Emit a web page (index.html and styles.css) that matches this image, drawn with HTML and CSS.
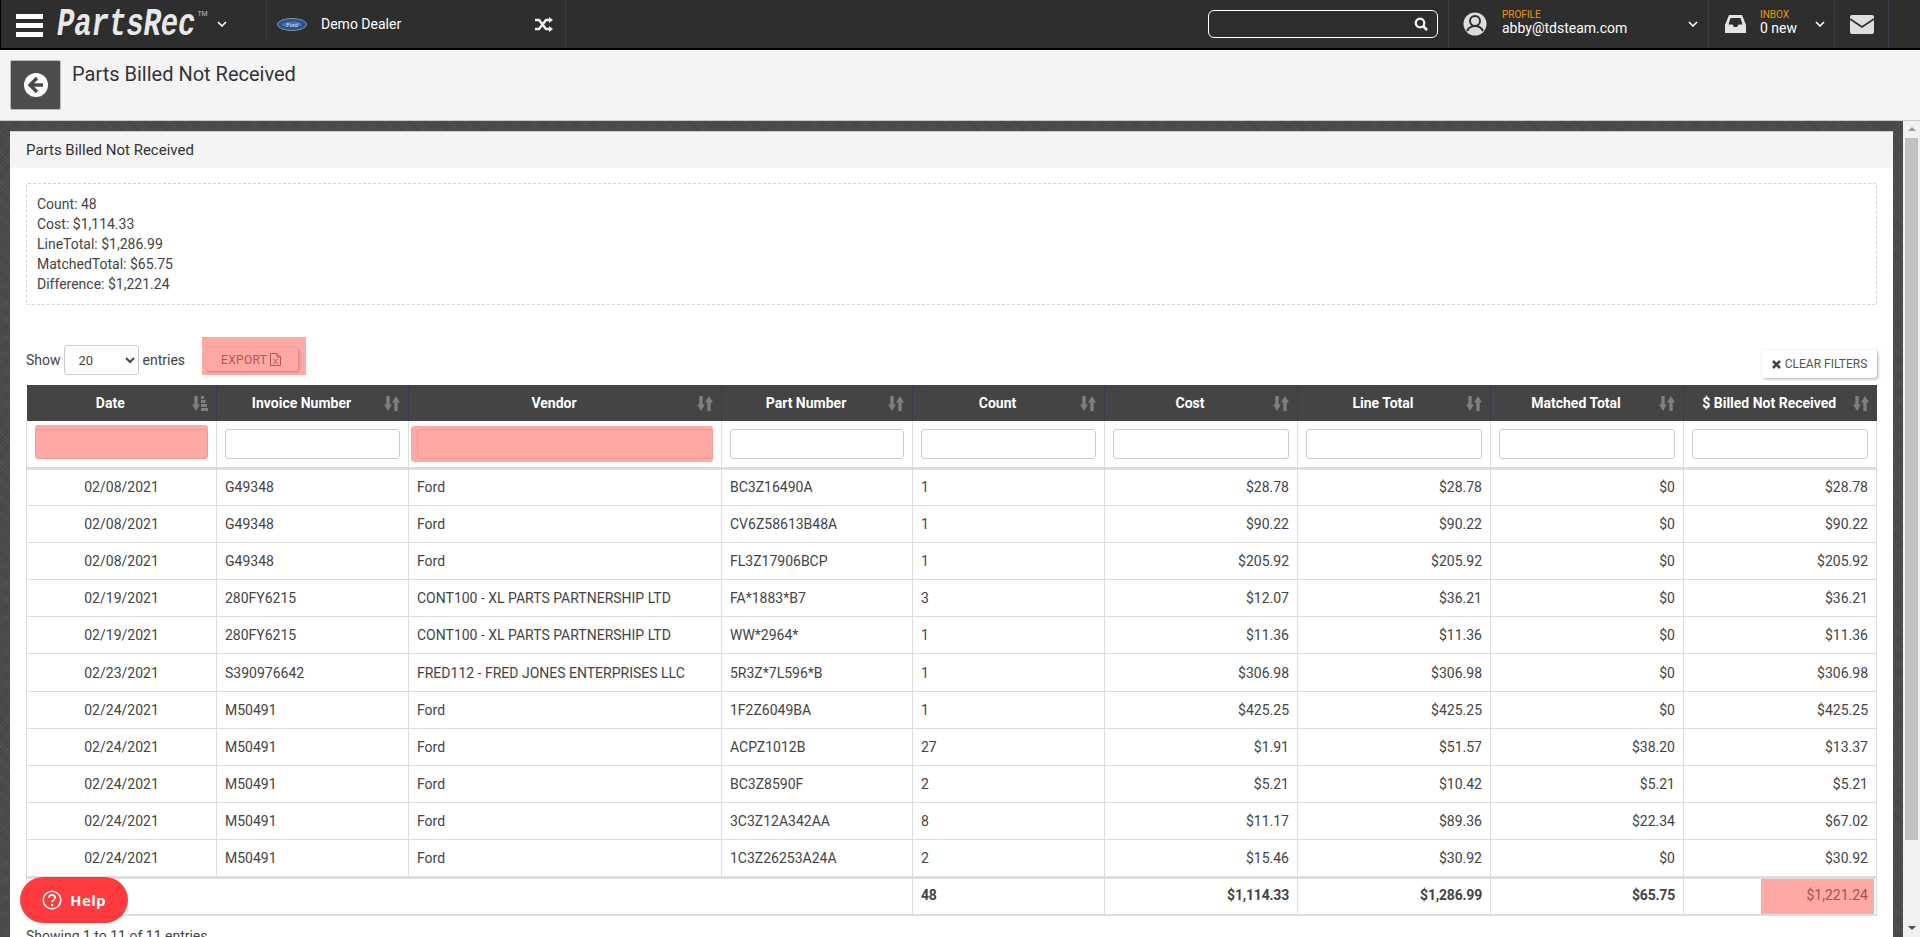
FILE: index.html
```html
<!DOCTYPE html>
<html lang="en">
<head>
    <meta charset="UTF-8">
    <meta name="viewport" content="width=device-width, initial-scale=1.0">
    <title>Parts Billed Not Received</title>
    <link rel="stylesheet" href="styles.css">
</head>
<body>
    <svg class="sprites" width="0" height="0">
        <symbol id="sort-both" viewBox="0 0 16 15">
            <path d="M2.300 0h3.400v8.500h2.300L4 15 0 8.500h2.300zM10.300 15h3.400V6.500H16L12 0 8 6.500h2.300z"/>
        </symbol>
        <symbol id="sort-asc" viewBox="0 0 16 15">
            <path d="M2.300 0h3.400v8.500h2.300L4 15 0 8.500h2.300zM9 0h3v3H9zM9 4h4.500v3H9zM9 8h6v3H9zM9 12h7v3H9z"/>
        </symbol>
    </svg>

    <header class="topbar">
        <div class="brand">
            <div class="burger"><span></span><span></span><span></span></div>
            <span class="logo">PartsRec</span>
            <span class="tm">TM</span>
            <svg class="chev" width="10" height="6" viewBox="0 0 10 6"><path d="M1 1l4 4 4-4" fill="none" stroke="#fff" stroke-width="1.600"/></svg>
        </div>
        <div class="dealer">
            <svg class="ford" width="30" height="13" viewBox="0 0 30 13">
                <ellipse cx="15" cy="6.500" rx="14.500" ry="6" fill="#2a4f8f" stroke="#8d97a3"/>
                <ellipse cx="15" cy="6.500" rx="10" ry="3" fill="#4a6fae"/>
                <text x="15" y="9" class="ford-text" text-anchor="middle">Ford</text>
            </svg>
            <span class="dealer-name">Demo Dealer</span>
            <svg class="shuffle" width="18" height="15" viewBox="0 0 18 15">
                <path d="M0 3h4l7 9h3M0 12h4l7-9h3" fill="none" stroke="#f0f0f0" stroke-width="2.400"/>
                <path d="M14 0l4 3-4 3zM14 9l4 3-4 3z" fill="#f0f0f0"/>
            </svg>
        </div>
        <div class="top-spacer"></div>
        <div class="search">
            <svg width="14" height="14" viewBox="0 0 14 14"><circle cx="6" cy="6" r="4.300" fill="none" stroke="#fff" stroke-width="2.200"/><path d="M9 9l4 4" stroke="#fff" stroke-width="2.600"/></svg>
        </div>
        <div class="top-item profile">
            <svg width="24" height="24" viewBox="0 0 24 24">
                <circle cx="12" cy="12" r="11.500" fill="#dcdcdc"/>
                <circle cx="12" cy="9" r="5" fill="#dcdcdc" stroke="#2e2e2e" stroke-width="2"/>
                <path d="M4 19c2-4 5-5 8-5s6 1 8 5" fill="none" stroke="#2e2e2e" stroke-width="2"/>
            </svg>
            <div class="top-text">
                <span class="top-label">PROFILE</span>
                <span class="top-value">abby@tdsteam.com</span>
            </div>
            <svg class="chev" width="10" height="6" viewBox="0 0 10 6"><path d="M1 1l4 4 4-4" fill="none" stroke="#fff" stroke-width="1.600"/></svg>
        </div>
        <div class="top-item inbox">
            <svg width="21" height="18" viewBox="0 0 21 18">
                <path d="M4 0h13l4 10v8H0v-8z" fill="#e4e4e4"/>
                <path d="M5.500 3h10l2 6.500h-4L12 12H9L7.500 9.500h-4z" fill="#2e2e2e"/>
            </svg>
            <div class="top-text">
                <span class="top-label">INBOX</span>
                <span class="top-value">0 new</span>
            </div>
            <svg class="chev" width="10" height="6" viewBox="0 0 10 6"><path d="M1 1l4 4 4-4" fill="none" stroke="#fff" stroke-width="1.600"/></svg>
        </div>
        <div class="top-item mail">
            <svg width="24" height="19" viewBox="0 0 24 19">
                <rect width="24" height="19" rx="2" fill="#dedede"/>
                <path d="M0 4l12 8 12-8" fill="none" stroke="#2e2e2e" stroke-width="1.800"/>
            </svg>
        </div>
    </header>

    <div class="subheader">
        <div class="back-btn">
            <svg width="24" height="24" viewBox="0 0 24 24">
                <circle cx="12" cy="12" r="12" fill="#fff"/>
                <path d="M13 5l-7 7 7 7M6.500 12H19" fill="none" stroke="#4a4a4a" stroke-width="3.400"/>
            </svg>
        </div>
        <h1 class="page-title">Parts Billed Not Received</h1>
    </div>

    <div class="workspace">
        <main class="content">
            <section class="panel">
                <h2 class="panel-title">Parts Billed Not Received</h2>
                <div class="panel-body">
                    <div class="summary">
                        <div>Count: 48</div>
                        <div>Cost: $1,114.33</div>
                        <div>LineTotal: $1,286.99</div>
                        <div>MatchedTotal: $65.75</div>
                        <div>Difference: $1,221.24</div>
                    </div>

                    <div class="table-tools">
                        <div class="length">
                            <span>Show</span>
                            <select class="length-select"><option>20</option></select>
                            <span>entries</span>
                        </div>
                        <div class="export-mark">
                            <button class="export-btn" type="button">EXPORT
                                <svg width="11" height="13" viewBox="0 0 11 13">
                                    <path d="M.5.500h6.500l3.500 3.500v8.500H.5zM7 .5V4h3.500M3.500 6l4 5M7.500 6l-4 5" fill="none" stroke="#c0504d"/>
                                </svg>
                            </button>
                        </div>
                        <button class="clear-btn" type="button">
                            <svg width="9" height="9" viewBox="0 0 9 9"><path d="M1 1l7 7M8 1L1 8" stroke="#444" stroke-width="2.600"/></svg>
                            CLEAR FILTERS
                        </button>
                    </div>

                    <table class="grid">
                        <colgroup>
                            <col class="c-date"><col class="c-inv"><col class="c-vendor"><col class="c-part"><col class="c-count">
                            <col class="c-cost"><col class="c-line"><col class="c-match"><col class="c-billed">
                        </colgroup>
                        <thead>
                            <tr class="head-row">
                                <th><div class="th-in"><span>Date</span><svg class="sort"><use href="#sort-asc"/></svg></div></th>
                                <th><div class="th-in"><span>Invoice Number</span><svg class="sort"><use href="#sort-both"/></svg></div></th>
                                <th><div class="th-in"><span>Vendor</span><svg class="sort"><use href="#sort-both"/></svg></div></th>
                                <th><div class="th-in"><span>Part Number</span><svg class="sort"><use href="#sort-both"/></svg></div></th>
                                <th><div class="th-in"><span>Count</span><svg class="sort"><use href="#sort-both"/></svg></div></th>
                                <th><div class="th-in"><span>Cost</span><svg class="sort"><use href="#sort-both"/></svg></div></th>
                                <th><div class="th-in"><span>Line Total</span><svg class="sort"><use href="#sort-both"/></svg></div></th>
                                <th><div class="th-in"><span>Matched Total</span><svg class="sort"><use href="#sort-both"/></svg></div></th>
                                <th><div class="th-in"><span>$ Billed Not Received</span><svg class="sort"><use href="#sort-both"/></svg></div></th>
                            </tr>
                            <tr class="filter-row">
                                <td><input class="filter filter-date" type="text"></td>
                                <td><input class="filter" type="text"></td>
                                <td><input class="filter filter-vendor" type="text"></td>
                                <td><input class="filter" type="text"></td>
                                <td><input class="filter" type="text"></td>
                                <td><input class="filter" type="text"></td>
                                <td><input class="filter" type="text"></td>
                                <td><input class="filter" type="text"></td>
                                <td><input class="filter" type="text"></td>
                            </tr>
                        </thead>
                        <tbody>
                            <tr><td class="mid">02/08/2021</td><td>G49348</td><td>Ford</td><td>BC3Z16490A</td><td>1</td><td class="num">$28.78</td><td class="num">$28.78</td><td class="num">$0</td><td class="num">$28.78</td></tr>
                            <tr><td class="mid">02/08/2021</td><td>G49348</td><td>Ford</td><td>CV6Z58613B48A</td><td>1</td><td class="num">$90.22</td><td class="num">$90.22</td><td class="num">$0</td><td class="num">$90.22</td></tr>
                            <tr><td class="mid">02/08/2021</td><td>G49348</td><td>Ford</td><td>FL3Z17906BCP</td><td>1</td><td class="num">$205.92</td><td class="num">$205.92</td><td class="num">$0</td><td class="num">$205.92</td></tr>
                            <tr><td class="mid">02/19/2021</td><td>280FY6215</td><td>CONT100 - XL PARTS PARTNERSHIP LTD</td><td>FA*1883*B7</td><td>3</td><td class="num">$12.07</td><td class="num">$36.21</td><td class="num">$0</td><td class="num">$36.21</td></tr>
                            <tr><td class="mid">02/19/2021</td><td>280FY6215</td><td>CONT100 - XL PARTS PARTNERSHIP LTD</td><td>WW*2964*</td><td>1</td><td class="num">$11.36</td><td class="num">$11.36</td><td class="num">$0</td><td class="num">$11.36</td></tr>
                            <tr><td class="mid">02/23/2021</td><td>S390976642</td><td>FRED112 - FRED JONES ENTERPRISES LLC</td><td>5R3Z*7L596*B</td><td>1</td><td class="num">$306.98</td><td class="num">$306.98</td><td class="num">$0</td><td class="num">$306.98</td></tr>
                            <tr><td class="mid">02/24/2021</td><td>M50491</td><td>Ford</td><td>1F2Z6049BA</td><td>1</td><td class="num">$425.25</td><td class="num">$425.25</td><td class="num">$0</td><td class="num">$425.25</td></tr>
                            <tr><td class="mid">02/24/2021</td><td>M50491</td><td>Ford</td><td>ACPZ1012B</td><td>27</td><td class="num">$1.91</td><td class="num">$51.57</td><td class="num">$38.20</td><td class="num">$13.37</td></tr>
                            <tr><td class="mid">02/24/2021</td><td>M50491</td><td>Ford</td><td>BC3Z8590F</td><td>2</td><td class="num">$5.21</td><td class="num">$10.42</td><td class="num">$5.21</td><td class="num">$5.21</td></tr>
                            <tr><td class="mid">02/24/2021</td><td>M50491</td><td>Ford</td><td>3C3Z12A342AA</td><td>8</td><td class="num">$11.17</td><td class="num">$89.36</td><td class="num">$22.34</td><td class="num">$67.02</td></tr>
                            <tr><td class="mid">02/24/2021</td><td>M50491</td><td>Ford</td><td>1C3Z26253A24A</td><td>2</td><td class="num">$15.46</td><td class="num">$30.92</td><td class="num">$0</td><td class="num">$30.92</td></tr>
                        </tbody>
                        <tfoot>
                            <tr>
                                <td colspan="4"></td>
                                <td>48</td>
                                <td class="num">$1,114.33</td>
                                <td class="num">$1,286.99</td>
                                <td class="num">$65.75</td>
                                <td class="num total-flag">$1,221.24</td>
                            </tr>
                        </tfoot>
                    </table>

                    <div class="table-info">Showing 1 to 11 of 11 entries</div>
                </div>
            </section>
        </main>
        <div class="scrollbar">
            <span class="arrow-up"></span>
            <div class="thumb"></div>
            <span class="arrow-down"></span>
        </div>
    </div>

    <button class="help-btn" type="button">
        <svg width="20" height="20" viewBox="0 0 20 20">
            <circle cx="10" cy="10" r="8.800" fill="none" stroke="#fff" stroke-width="1.600"/>
            <path d="M7 7.800c0-4 6-4 6 0 0 2.200-3 2.200-3 4.400" fill="none" stroke="#fff" stroke-width="1.800"/>
            <circle cx="10" cy="15" r="1.200" fill="#fff"/>
        </svg>
        Help
    </button>
</body>
</html>
```

FILE: styles.css
```css
* {
    box-sizing: border-box;
}
html, body {
    height: 100%;
}
body {
    margin: 0;
    display: flex;
    flex-direction: column;
    overflow: hidden;
    font-family: Roboto, "Liberation Sans", sans-serif;
    font-size: 14px;
    color: #444;
    background-color: #f4f4f4;
}
.sprites {
    position: absolute;
}

/* top bar */
.topbar {
    display: flex;
    flex: none;
    height: 50px;
    color: #fff;
    background-color: #2e2e2e;
    border-left: 1px solid #000;
    border-bottom: 2px solid #000;
}
.brand {
    display: flex;
    align-items: center;
    width: 266px;
    height: 42px;
    padding-left: 15px;
    border-right: 1px solid #3a3a48;
}
.burger {
    display: flex;
    flex-direction: column;
    gap: 4px;
    width: 27px;
    margin-top: 8px;
    margin-right: 14px;
}
.burger span {
    height: 5px;
    background-color: #fff;
}
.logo {
    display: inline-block;
    margin-top: 7px;
    font-family: "Liberation Mono", monospace;
    font-style: italic;
    font-weight: 700;
    font-size: 29px;
    letter-spacing: -.1px;
    color: #e8e8e8;
    transform: scaleY(1.35);
}
.tm {
    align-self: flex-start;
    margin-top: 10px;
    margin-left: 2px;
    font-size: 7px;
    color: #bbb;
}
.brand .chev {
    margin-top: 6px;
    margin-left: 9px;
}
.dealer {
    display: flex;
    align-items: center;
    width: 299px;
    padding-left: 10px;
    border-right: 1px solid #3a3a48;
}
.ford-text {
    font-family: "Liberation Serif", serif;
    font-style: italic;
    font-size: 6px;
    fill: #dfe6f0;
}
.dealer-name {
    margin-left: 14px;
    font-size: 14px;
    font-weight: 400;
}
.shuffle {
    margin-left: auto;
    margin-right: 12px;
}
.top-spacer {
    flex: 1;
}
.search {
    display: flex;
    align-items: center;
    justify-content: flex-end;
    width: 230px;
    height: 28px;
    margin-top: 10px;
    padding-right: 9px;
    border: 1px solid #fff;
    border-radius: 6px;
}
.top-item {
    display: flex;
    align-items: center;
    height: 48px;
    border-right: 1px solid #3a3a48;
}
.profile {
    width: 261px;
    margin-left: 10px;
    padding-left: 14px;
    border-left: 1px solid #3a3a48;
}
.inbox {
    width: 126px;
    padding-left: 16px;
}
.inbox .top-text {
    margin-left: 14px;
}
.mail {
    width: 54px;
    padding-left: 15px;
    margin-right: 31px;
}
.top-text {
    display: flex;
    flex-direction: column;
    margin-left: 15px;
    margin-top: -2px;
}
.top-label {
    font-size: 10px;
    line-height: 11px;
    color: #e69a00;
}
.top-value {
    font-size: 14px;
    line-height: 17px;
}
.top-item .chev {
    margin-left: auto;
    margin-right: 10px;
}
.inbox .chev {
    margin-right: 9px;
}

/* page heading */
.subheader {
    display: flex;
    flex: none;
    height: 71px;
    padding: 10px 10px 0;
    background-color: #f4f4f4;
    border-bottom: 1px solid #ccc;
}
.back-btn {
    display: flex;
    align-items: center;
    justify-content: center;
    width: 51px;
    height: 50px;
    background-color: #4d4d4d;
    border: 1px solid #bbb;
    border-radius: 2px;
}
.page-title {
    margin: 2px 0 0 11px;
    font-size: 20px;
    font-weight: 400;
    line-height: 24px;
    color: #333;
}

/* dark textured area + panel */
.workspace {
    display: flex;
    flex: 1;
    min-height: 0;
}
.content {
    flex: 1;
    min-width: 0;
    overflow: hidden;
    padding: 10px 10px 0;
    background-color: #4c4c4c;
    background-image:
        repeating-linear-gradient(45deg, rgba(0, 0, 0, .09) 0 1px, transparent 1px 2px),
        repeating-linear-gradient(-45deg, rgba(255, 255, 255, .04) 0 1px, transparent 1px 3px);
}
.panel {
    background-color: #fff;
    border-top: 1px solid #ccc;
}
.panel-title {
    margin: 0;
    height: 36px;
    padding: 0 16px;
    font-size: 15px;
    font-weight: 400;
    line-height: 36px;
    color: #333;
    background-color: #f4f4f4;
}
.panel-body {
    padding: 15px 16px 20px;
}
.summary {
    height: 122px;
    padding: 10px;
    line-height: 20px;
    border: 1px dashed #d4d4d4;
    border-radius: 2px;
}

/* show entries / export / clear */
.table-tools {
    display: flex;
    align-items: flex-start;
    height: 80px;
    padding-top: 32px;
}
.length {
    display: flex;
    align-items: center;
    gap: 3px;
    height: 30px;
    margin-top: 8px;
}
.length-select {
    width: 75px;
    height: 30px;
    margin-right: 1px;
    padding-left: 10px;
    font-family: Roboto, sans-serif;
    font-size: 13px;
    color: #444;
    background-color: #fff;
    border: 1px solid #ccc;
    border-radius: 3px;
}
.export-mark {
    display: flex;
    align-items: center;
    width: 104px;
    height: 38px;
    margin-left: 17px;
    padding-left: 4px;
    background-color: #ffa9a4;
}
.export-btn {
    display: flex;
    align-items: center;
    gap: 3px;
    width: 92px;
    height: 23px;
    margin-top: 7px;
    padding: 0 0 0 15px;
    font-family: Roboto, sans-serif;
    font-size: 12px;
    letter-spacing: .3px;
    color: #c0504d;
    background-color: #ffa9a4;
    border: none;
    border-radius: 3px;
    box-shadow: 1px 1px 3px rgba(150, 60, 60, .45);
}
.clear-btn {
    display: flex;
    align-items: center;
    justify-content: center;
    gap: 4px;
    width: 115px;
    height: 28px;
    margin-top: 13px;
    margin-left: auto;
    padding: 0;
    font-family: Roboto, sans-serif;
    font-size: 12px;
    color: #555;
    background-color: #fff;
    border: none;
    border-radius: 3px;
    box-shadow: 1px 1px 3px rgba(0, 0, 0, .35);
}

/* table */
.grid {
    width: 1850px;
    table-layout: fixed;
    border-collapse: collapse;
}
.c-date { width: 190px; }
.c-inv { width: 192px; }
.c-vendor { width: 313px; }
.c-part { width: 191px; }
.c-count { width: 192px; }
.c-cost { width: 193px; }
.c-line { width: 193px; }
.c-match { width: 193px; }
.c-billed { width: 193px; }
.head-row th {
    height: 36px;
    padding: 0 8px;
    font-size: 14px;
    font-weight: 700;
    color: #fff;
    background-color: #444;
    border-right: 1px solid #3a3a55;
}
.head-row th:last-child {
    border-right: none;
}
.th-in {
    display: flex;
    align-items: center;
    gap: 6px;
}
.th-in span {
    flex: 1;
    text-align: center;
    white-space: nowrap;
}
.sort {
    flex: none;
    width: 16px;
    height: 15px;
    fill: #7f7f7f;
}
.filter-row td {
    height: 47px;
    padding: 1px 8px 0;
    border: 1px solid #ddd;
    border-top: none;
    border-bottom: 3px solid #ddd;
}
.filter {
    display: block;
    width: 100%;
    height: 30px;
    background-color: #fff;
    border: 1px solid #ccc;
    border-radius: 3px;
}
.filter-date {
    background-color: #ffa9a4;
    border-color: #f29a95;
    box-shadow: 0 -4px 0 #ffa9a4;
}
.filter-vendor {
    background-color: #ffa9a4;
    border-color: #f29a95;
    box-shadow: -6px -3px 0 #ffa9a4, -6px 3px 0 #ffa9a4, 0 -3px 0 #ffa9a4, 0 3px 0 #ffa9a4;
}
.grid tbody td {
    height: 37.2px;
    padding: 0 8px;
    white-space: nowrap;
    border: 1px solid #ddd;
}
.grid tfoot td {
    height: 38px;
    padding: 0 8px 2px;
    font-weight: 700;
    letter-spacing: -.2px;
    border: 1px solid #ddd;
    border-top: 3px solid #ddd;
    border-bottom: 2px solid #ddd;
}
.grid .mid {
    text-align: center;
}
.grid .num {
    text-align: right;
}
.grid .total-flag {
    font-weight: 400;
    letter-spacing: 0;
    color: #a8504c;
    background-image: linear-gradient(to right, #fff 77px, #ffa9a4 77px);
    background-repeat: no-repeat;
    background-size: calc(100% - 2px) 100%;
}
.table-info {
    padding-top: 10px;
    line-height: 20px;
}

/* page scrollbar */
.scrollbar {
    display: flex;
    flex: none;
    flex-direction: column;
    align-items: center;
    width: 17px;
    background-color: #f1f1f1;
}
.arrow-up, .arrow-down {
    flex: none;
    width: 0;
    height: 0;
    border-left: 4px solid transparent;
    border-right: 4px solid transparent;
}
.arrow-up {
    margin-top: 6px;
    margin-bottom: 7px;
    border-bottom: 4px solid #a0a0a0;
}
.arrow-down {
    margin-top: 86px;
    border-top: 4px solid #505050;
}
.thumb {
    flex: none;
    width: 13px;
    height: 702px;
    background-color: #c1c1c1;
}

/* help widget */
.help-btn {
    position: fixed;
    left: 20px;
    bottom: 14px;
    display: flex;
    align-items: center;
    gap: 8px;
    width: 108px;
    height: 46px;
    padding-left: 22px;
    font-family: "Open Sans", Roboto, sans-serif;
    font-size: 15px;
    font-weight: 700;
    letter-spacing: .4px;
    color: #fff;
    background-color: #ff3b3f;
    border: none;
    border-radius: 23px;
}
```
